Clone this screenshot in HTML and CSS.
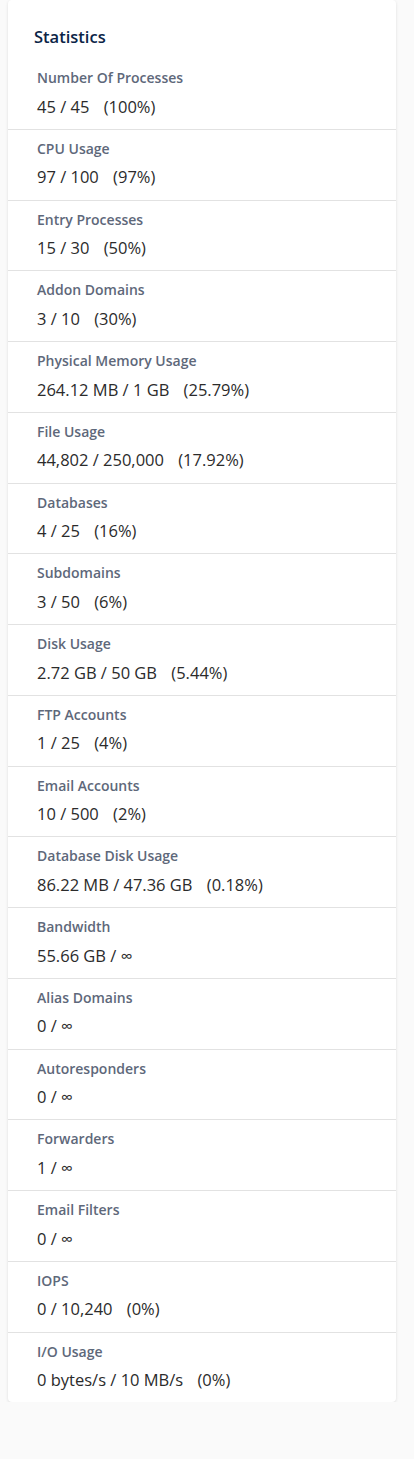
FILE: index.html
```html
<!DOCTYPE html>
<html lang="en">
<head>
<meta charset="utf-8">
<title>Statistics</title>
<link rel="stylesheet" href="styles.css">
</head>
<body>
<div class="card">
  <h2 class="card-title">Statistics</h2>
  <ul class="stats">
    <li class="stat"><div class="label">Number Of Processes</div><div class="value">45 / 45 <span class="pct">(100%)</span></div></li>
    <li class="stat"><div class="label">CPU Usage</div><div class="value">97 / 100 <span class="pct">(97%)</span></div></li>
    <li class="stat"><div class="label">Entry Processes</div><div class="value">15 / 30 <span class="pct">(50%)</span></div></li>
    <li class="stat"><div class="label">Addon Domains</div><div class="value">3 / 10 <span class="pct">(30%)</span></div></li>
    <li class="stat"><div class="label">Physical Memory Usage</div><div class="value">264.12 MB / 1 GB <span class="pct">(25.79%)</span></div></li>
    <li class="stat"><div class="label">File Usage</div><div class="value">44,802 / 250,000 <span class="pct">(17.92%)</span></div></li>
    <li class="stat"><div class="label">Databases</div><div class="value">4 / 25 <span class="pct">(16%)</span></div></li>
    <li class="stat"><div class="label">Subdomains</div><div class="value">3 / 50 <span class="pct">(6%)</span></div></li>
    <li class="stat"><div class="label">Disk Usage</div><div class="value">2.72 GB / 50 GB <span class="pct">(5.44%)</span></div></li>
    <li class="stat"><div class="label">FTP Accounts</div><div class="value">1 / 25 <span class="pct">(4%)</span></div></li>
    <li class="stat"><div class="label">Email Accounts</div><div class="value">10 / 500 <span class="pct">(2%)</span></div></li>
    <li class="stat"><div class="label">Database Disk Usage</div><div class="value">86.22 MB / 47.36 GB <span class="pct">(0.18%)</span></div></li>
    <li class="stat"><div class="label">Bandwidth</div><div class="value">55.66 GB / ∞</div></li>
    <li class="stat"><div class="label">Alias Domains</div><div class="value">0 / ∞</div></li>
    <li class="stat"><div class="label">Autoresponders</div><div class="value">0 / ∞</div></li>
    <li class="stat"><div class="label">Forwarders</div><div class="value">1 / ∞</div></li>
    <li class="stat"><div class="label">Email Filters</div><div class="value">0 / ∞</div></li>
    <li class="stat"><div class="label">IOPS</div><div class="value">0 / 10,240 <span class="pct">(0%)</span></div></li>
    <li class="stat"><div class="label">I/O Usage</div><div class="value">0 bytes/s / 10 MB/s <span class="pct">(0%)</span></div></li>
  </ul>
</div>
</body>
</html>
```
FILE: styles.css
```css
html, body {
  margin: 0;
  padding: 0;
  background: #fafafa;
}
body {
  font-family: "Open Sans", "Liberation Sans", sans-serif;
  color: #333;
}
.card {
  width: 388px;
  margin: 0 0 0 8px;
  background: #fff;
  border-radius: 4px;
  box-shadow: 0 1px 3px rgba(0, 0, 0, 0.12);
  padding-top: 26px;
}
.card-title {
  margin: 0 0 11px;
  padding-left: 26px;
  font-size: 16.5px;
  line-height: 22px;
  font-weight: 600;
  color: #0b2447;
}
.stats {
  list-style: none;
  margin: 0;
  padding: 0;
}
.stat {
  padding: 8px 29px 11px;
  border-top: 1px solid #e2e2e2;
}
.stat:first-child {
  border-top: 0;
}
.label {
  font-size: 14px;
  line-height: 21px;
  font-weight: 600;
  color: #5e687a;
}
.value {
  margin-top: 6.5px;
  font-size: 16.5px;
  line-height: 23.25px;
  font-weight: 400;
  color: #2b2b2b;
}
.pct {
  margin-left: 10px;
}
```
